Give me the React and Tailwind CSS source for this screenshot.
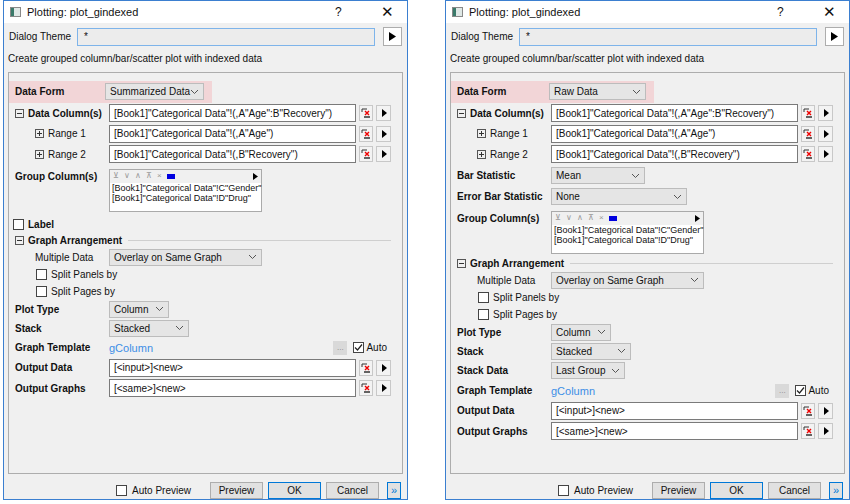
import React from "react";

const font = { fontFamily: '"Liberation Sans", Arial, sans-serif' };

const Chevron = () => (
  <svg width="9" height="6" viewBox="0 0 9 6" className="shrink-0">
    <path d="M1 1l3.5 3.5L8 1" fill="none" stroke="#555" strokeWidth="1" />
  </svg>
);

const Arrow = () => (
  <div className="w-[15px] h-[16px] border border-[#c8c8c8] bg-[#f3f3f3] flex items-center justify-center shrink-0">
    <svg width="6" height="8" viewBox="0 0 6 8"><path d="M1 0l5 4-5 4z" fill="#000" /></svg>
  </div>
);

const Picker = () => (
  <div className="w-[14px] h-[16px] border border-[#c8c8c8] bg-[#f3f3f3] flex items-center justify-center shrink-0">
    <svg width="10" height="12" viewBox="0 0 10 12">
      <path d="M1 2h5M1 2v3" stroke="#333" strokeWidth="1" fill="none" />
      <path d="M4 4l4 4M8 4l-4 4" stroke="#e00" strokeWidth="1.4" />
      <path d="M3 10h6" stroke="#333" strokeWidth="1.5" />
    </svg>
  </div>
);

const Box = ({ on }) => (
  <div className="w-[11px] h-[11px] border border-[#444] bg-white flex items-center justify-center shrink-0">
    {on && (
      <svg width="9" height="9" viewBox="0 0 9 9"><path d="M1 4.5l2.5 2.5L8 1.5" fill="none" stroke="#222" strokeWidth="1.2" /></svg>
    )}
  </div>
);

const Tree = ({ minus }) => (
  <div className="w-[9px] h-[9px] border border-[#555] flex items-center justify-center shrink-0 relative">
    <div className="w-[5px] h-px bg-[#333]" />
    {!minus && <div className="absolute w-px h-[5px] bg-[#333]" />}
  </div>
);

const Select = ({ value, w }) => (
  <div className="h-[17px] border border-[#bcbcbc] bg-[#e5e5e5] flex items-center justify-between px-[4px] whitespace-nowrap" style={{ width: w }}>
    <span>{value}</span>
    <Chevron />
  </div>
);

const Field = ({ value }) => (
  <div className="flex items-center gap-[3px] flex-1">
    <div className="flex-1 h-[18px] border border-[#7a7a7a] bg-white flex items-center px-[4px] whitespace-nowrap">{value}</div>
    <Picker />
    <Arrow />
  </div>
);

const Row = ({ h, label, bold = true, indent = 0, children, top }) => (
  <div className={"flex pr-[11px] " + (top ? "items-start pt-[4px]" : "items-center")} style={{ height: h }}>
    <div className={"w-[100px] shrink-0 flex items-center gap-[4px] whitespace-nowrap " + (bold ? "font-bold" : "")} style={{ paddingLeft: 6 + indent }}>
      {label}
    </div>
    {children}
  </div>
);

const GroupBox = () => (
  <div className="w-[153px] h-[43px] border border-[#aaa] bg-white">
    <div className="h-[13px] bg-[#f0f0f0] flex items-center gap-[5px] px-[3px] text-[#999] text-[8px]">
      <span>⊻</span><span>∨</span><span>∧</span><span>⊼</span><span>×</span>
      <div className="w-[8px] h-[5px] bg-[#0000e0]" />
      <div className="flex-1" />
      <svg width="5" height="7" viewBox="0 0 5 7"><path d="M0 0l5 3.5L0 7z" fill="#000" /></svg>
    </div>
    <div className="leading-[10px] text-[9px] px-[2px] whitespace-nowrap">[Book1]"Categorical Data"!C"Gender"<br />[Book1]"Categorical Data"!D"Drug"</div>
  </div>
);

const Dialog = ({ raw }) => {
  const gaRow = (
    <div className="flex items-center pl-[6px] pr-[11px] gap-[4px] font-bold whitespace-nowrap" style={{ height: 16 }}>
      <Tree minus /> <span>Graph Arrangement</span>
      <div className="flex-1 h-px bg-[#cfcfcf] ml-[2px]" />
    </div>
  );
  return (
    <div className="w-[405px] h-[500px] border border-[#3b7fd0] bg-[#f0f0f0] flex flex-col text-[10px] text-[#111]" style={font}>
      <div className="h-[22px] bg-white flex items-center px-[6px] gap-[6px] text-[11px]">
        <div className="w-[11px] h-[10px] border border-[#888] bg-[#dfe8e6] flex"><div className="w-[3px] bg-[#3a7a6a]" /></div>
        <span>Plotting: plot_gindexed</span>
        <div className="flex-1" />
        <span className="w-[40px] text-[12px]">?</span>
        <span className="w-[20px] text-[15px] font-light">✕</span>
      </div>
      <div className="flex items-center h-[24px] px-[5px] gap-[8px] mt-[2px]">
        <span className="w-[60px] whitespace-nowrap">Dialog Theme</span>
        <div className="flex-1 h-[18px] border border-[#7eb4ea] bg-[#ececec] px-[6px] flex items-center">*</div>
        <div className="w-[19px] h-[19px] border border-[#adadad] bg-white flex items-center justify-center">
          <svg width="7" height="9" viewBox="0 0 7 9"><path d="M0 0l7 4.5L0 9z" fill="#000" /></svg>
        </div>
      </div>
      <div className="px-[4px] h-[20px] flex items-center">Create grouped column/bar/scatter plot with indexed data</div>
      <div className="mx-[4px] mt-[3px] border border-[#adadad] h-[403px] flex flex-col pt-[8px]">
        <div className="flex items-center h-[22px] w-[203px] bg-[#f2d5d7] pr-[8px]">
          <div className="w-[100px] pl-[6px] font-bold">Data Form</div>
          <Select value={raw ? "Raw Data" : "Summarized Data"} w={99} />
        </div>
        <Row h={21} label={<><Tree minus /><span>Data Column(s)</span></>}>
          <Field value={'[Book1]"Categorical Data"!(,A"Age":B"Recovery")'} />
        </Row>
        <Row h={20} bold={false} indent={20} label={<><Tree /><span>Range 1</span></>}>
          <Field value={'[Book1]"Categorical Data"!(,A"Age")'} />
        </Row>
        <Row h={21} bold={false} indent={20} label={<><Tree /><span>Range 2</span></>}>
          <Field value={'[Book1]"Categorical Data"!(,B"Recovery")'} />
        </Row>
        {raw && (
          <>
            <Row h={22} label="Bar Statistic"><Select value="Mean" w={94} /></Row>
            <Row h={20} label="Error Bar Statistic"><Select value="None" w={136} /></Row>
          </>
        )}
        <Row h={raw ? 49 : 52} label="Group Column(s)" top><GroupBox /></Row>
        {!raw && (
          <div className="flex items-center pl-[4px] gap-[4px] font-bold" style={{ height: 16 }}>
            <Box /> Label
          </div>
        )}
        {gaRow}
        <Row h={17} bold={false} indent={20} label="Multiple Data"><Select value="Overlay on Same Graph" w={153} /></Row>
        <div className="flex items-center pl-[27px] gap-[4px]" style={{ height: 17 }}><Box /> Split Panels by</div>
        <div className="flex items-center pl-[27px] gap-[4px]" style={{ height: 17 }}><Box /> Split Pages by</div>
        <Row h={19} label="Plot Type"><Select value="Column" w={60} /></Row>
        <Row h={19} label="Stack"><Select value="Stacked" w={80} /></Row>
        {raw && <Row h={20} label="Stack Data"><Select value="Last Group" w={74} /></Row>}
        <Row h={20} label="Graph Template">
          <span className="text-[#3d8ee6] text-[11px]">gColumn</span>
          <div className="flex-1" />
          <div className="w-[14px] h-[14px] bg-[#d9d9d9] text-[#888] text-[8px] flex items-center justify-center mr-[6px]">...</div>
          <Box on />
          <span className="ml-[2px] mr-[4px]">Auto</span>
        </Row>
        <Row h={20} label="Output Data"><Field value="[<input>]<new>" /></Row>
        <Row h={21} label="Output Graphs"><Field value="[<same>]<new>" /></Row>
      </div>
      <div className="flex items-center justify-end h-[18px] mt-[7px] pr-[6px] gap-[5px]">
        <Box /> <span className="mr-[14px]">Auto Preview</span>
        <div className="w-[53px] h-[17px] border border-[#adadad] bg-[#e1e1e1] flex items-center justify-center">Preview</div>
        <div className="w-[53px] h-[17px] border border-[#0078d7] bg-[#e1e1e1] flex items-center justify-center">OK</div>
        <div className="w-[53px] h-[17px] border border-[#adadad] bg-[#e1e1e1] flex items-center justify-center">Cancel</div>
        <div className="w-[14px] h-[17px] border border-[#0078d7] bg-[#e1e1e1] flex items-center justify-center ml-[3px] text-[#0078d7] text-[11px]">»</div>
      </div>
    </div>
  );
};

export default function App() {
  return (
    <div className="w-[850px] h-[504px] bg-white flex gap-[37px] pl-[3px]">
      <Dialog />
      <Dialog raw />
    </div>
  );
}
